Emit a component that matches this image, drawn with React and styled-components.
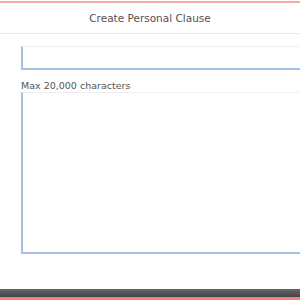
import React from 'react';
import styled, { createGlobalStyle } from 'styled-components';

const GlobalStyle = createGlobalStyle`
  html, body {
    margin: 0;
    padding: 0;
    background: #ffffff;
  }
  * {
    box-sizing: border-box;
  }
`;

function App() {
  return (
    <>
      <GlobalStyle />
      <Page>
        <TopAccent />
        <Header>
          <Title>Create Personal Clause</Title>
        </Header>
        <Body>
          <TitleInput type="text" />
          <Hint>Max 20,000 characters</Hint>
          <ClauseText />
        </Body>
        <Footer>
          <FooterBar />
          <FooterAccent />
        </Footer>
      </Page>
    </>
  );
}

const Page = styled.div`
  width: 300px;
  height: 300px;
  display: flex;
  flex-direction: column;
  overflow: hidden;
  background: #fff;
  font-family: 'DejaVu Sans', 'Open Sans', sans-serif;
`;
const TopAccent = styled.div`
  margin-top: 1px;
  height: 2px;
  background: #f5a8a8;
`;
const Header = styled.div`
  height: 31px;
  display: flex;
  align-items: center;
  justify-content: center;
  border-bottom: 1px solid #e6e6e6;
`;
const Title = styled.h1`
  margin: 0;
  font-size: 10.5px;
  font-weight: normal;
  color: #574f4f;
`;
const Body = styled.div`
  flex: 1;
  display: flex;
  flex-direction: column;
  align-items: flex-start;
  padding: 12px 0 0 21px;
`;
const TitleInput = styled.input`
  width: 320px;
  flex-shrink: 0;
  height: 24px;
  margin: 0;
  padding: 0 6px;
  border: none;
  border-top: 1px solid #eeeef6;
  border-left: 2px solid #a4bfe8;
  border-bottom: 2px solid #a4bfe8;
  background: #fff;
  outline: none;
`;
const Hint = styled.div`
  margin-top: 9px;
  height: 13px;
  line-height: 13px;
  font-size: 9.5px;
  color: #555;
`;
const ClauseText = styled.textarea`
  width: 320px;
  flex-shrink: 0;
  height: 162px;
  margin: 0;
  padding: 6px;
  resize: none;
  border: none;
  border-top: 1px solid #eeeef6;
  border-left: 2px solid #a4bfe8;
  border-bottom: 2px solid #a4bfe8;
  background: #fff;
  outline: none;
`;
const Footer = styled.div`
  display: flex;
  flex-direction: column;
`;
const FooterBar = styled.div`
  height: 8px;
  background: linear-gradient(#666, #444);
`;
const FooterAccent = styled.div`
  height: 3px;
  background: #f47f7f;
`;

export default App;
